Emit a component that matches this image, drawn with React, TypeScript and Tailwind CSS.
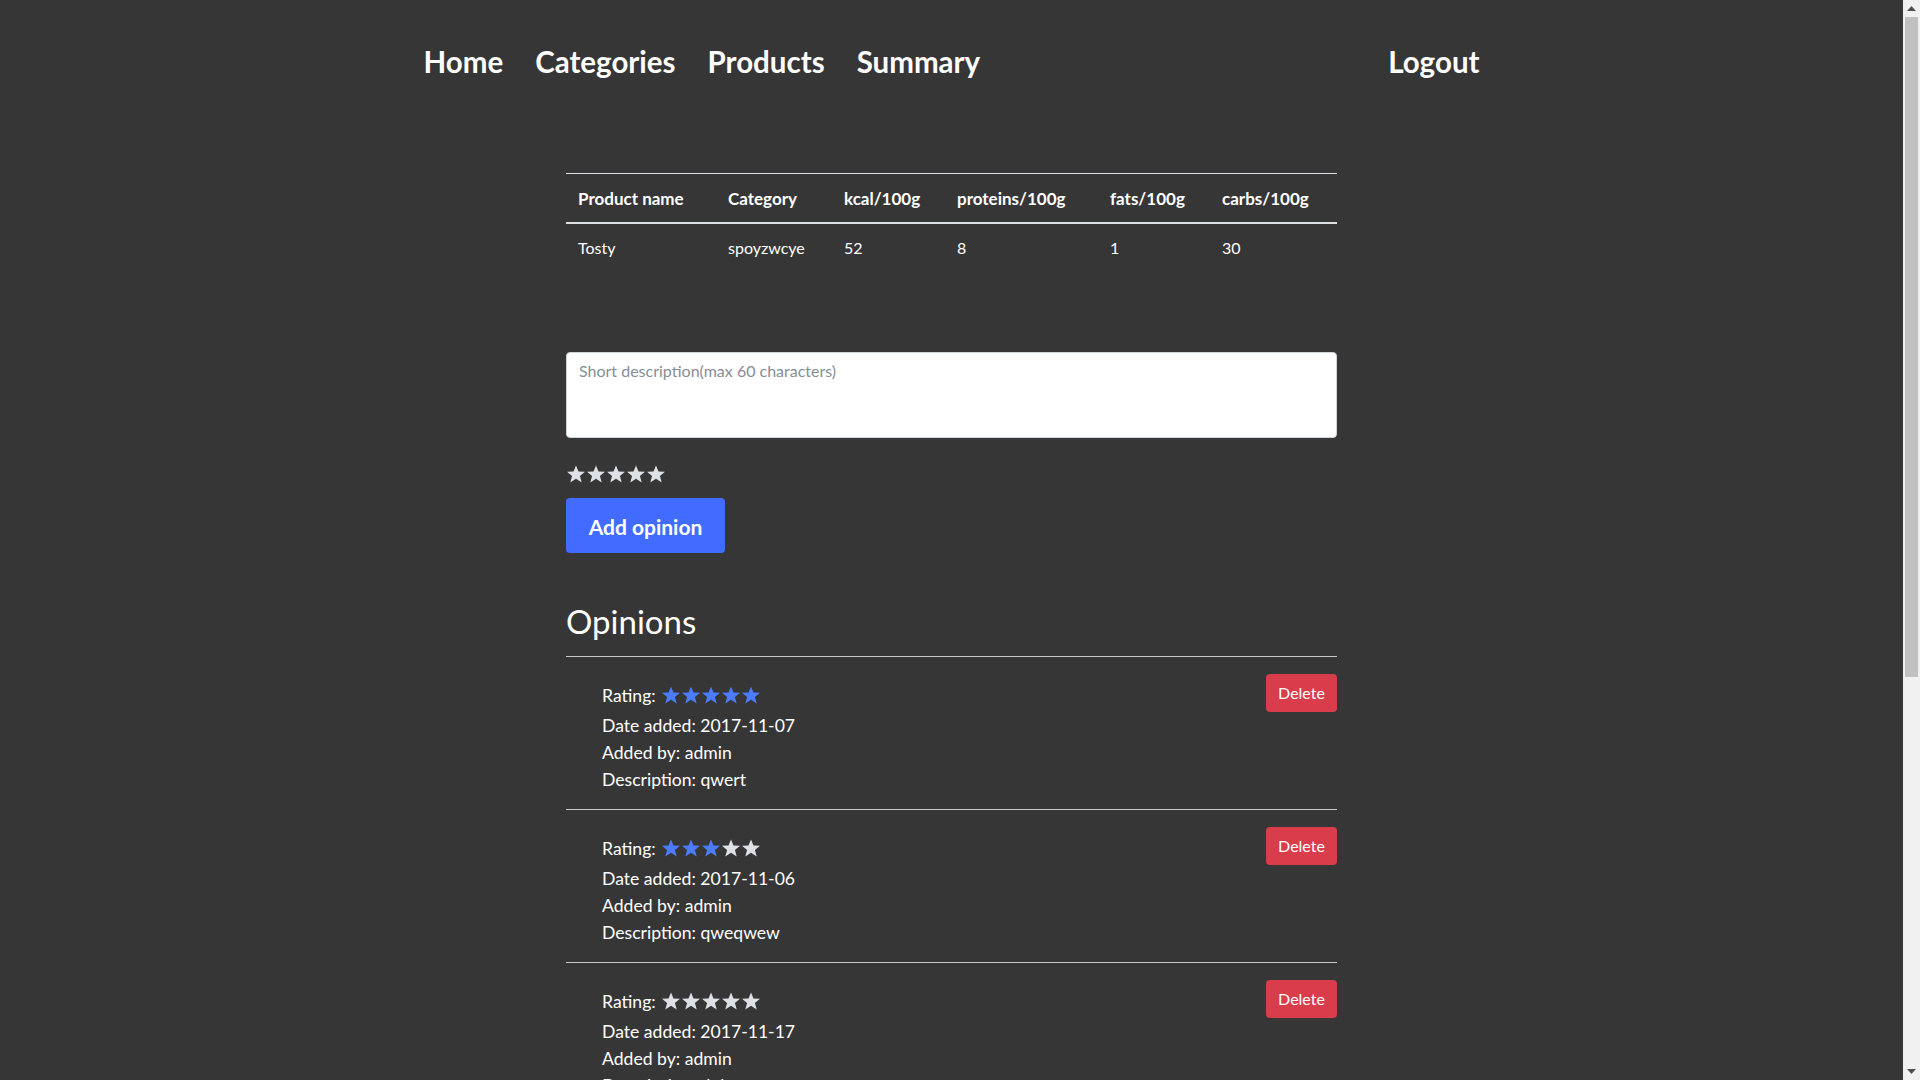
import React from 'react';

const NAV_LEFT = ['Home', 'Categories', 'Products', 'Summary'];

const COLUMNS = [
  { label: 'Product name', w: 'w-[150px]' },
  { label: 'Category', w: 'w-[116px]' },
  { label: 'kcal/100g', w: 'w-[113px]' },
  { label: 'proteins/100g', w: 'w-[153px]' },
  { label: 'fats/100g', w: 'w-[112px]' },
  { label: 'carbs/100g', w: 'w-[127px]' },
];

const ROW = ['Tosty', 'spoyzwcye', '52', '8', '1', '30'];

const OPINIONS = [
  { rating: 5, date: '2017-11-07', by: 'admin', desc: 'qwert' },
  { rating: 3, date: '2017-11-06', by: 'admin', desc: 'qweqwew' },
  { rating: 0, date: '2017-11-17', by: 'admin', desc: 'dobre' },
  { rating: 4, date: '2017-11-18', by: 'admin', desc: 'smaczne' },
];

function Star({ filled }: { filled?: boolean }) {
  return (
    <svg viewBox="0 0 24 23" className={`w-[20px] h-[18px] ${filled ? 'text-[#4b7bff]' : 'text-[#dde0e5]'}`} fill="currentColor">
      <polygon points="12,0.5 15.2,8.3 23.5,8.6 17,13.9 19.3,22.3 12,17.6 4.7,22.3 7,13.9 0.5,8.6 8.8,8.3" />
    </svg>
  );
}

function Stars({ count }: { count: number }) {
  return (
    <span className="flex items-center">
      {[0, 1, 2, 3, 4].map((i) => (
        <Star key={i} filled={i < count} />
      ))}
    </span>
  );
}

function Scrollbar() {
  return (
    <aside className="w-[17px] h-full flex flex-col bg-[#f1f1f1] shrink-0">
      <div className="h-[17px] flex items-center justify-center">
        <svg width="9" height="5" viewBox="0 0 9 5" fill="#505050"><polygon points="4.5,0 9,5 0,5" /></svg>
      </div>
      <div className="flex-1 px-[2px]">
        <div className="h-[660px] bg-[#c1c1c1]" />
      </div>
      <div className="h-[17px] flex items-center justify-center">
        <svg width="9" height="5" viewBox="0 0 9 5" fill="#505050"><polygon points="0,0 9,0 4.5,5" /></svg>
      </div>
    </aside>
  );
}

export default function App() {
  return (
    <div className="flex h-screen w-full overflow-hidden bg-[#363636] text-white font-['Lato',sans-serif]">
      <main className="flex-1 overflow-hidden">
        {/* Top navigation */}
        <nav className="w-[1056px] mx-auto pt-[44px] flex items-center justify-between text-[29.5px] leading-[36px] font-bold">
          <div className="flex gap-[32px]">
            {NAV_LEFT.map((n) => (
              <a key={n} className="cursor-pointer">{n}</a>
            ))}
          </div>
          <a className="cursor-pointer">Logout</a>
        </nav>

        <div className="w-[771px] mx-auto">
          {/* Product table */}
          <table className="w-full table-fixed mt-[93px] border-collapse text-base">
            <thead>
              <tr>
                {COLUMNS.map((c) => (
                  <th key={c.label} className={`${c.w} text-left font-bold text-[17px] leading-[24px] px-3 pt-[13px] pb-[11px] border-t border-b-2 border-t-[#dee2e6] border-b-[#dee2e6]`}>
                    {c.label}
                  </th>
                ))}
              </tr>
            </thead>
            <tbody>
              <tr>
                {ROW.map((v, i) => (
                  <td key={i} className="px-3 py-3 leading-[24px]">{v}</td>
                ))}
              </tr>
            </tbody>
          </table>

          {/* Add opinion form */}
          <textarea
            placeholder="Short description(max 60 characters)"
            className="block w-full h-[86px] mt-[80px] bg-white text-[#495057] border border-[#ced4da] rounded px-3 py-[6px] text-base leading-[24px] resize-none placeholder:text-[#868e96] outline-none"
          />
          <div className="mt-[27px] h-[18px] flex items-center">
            <Stars count={0} />
          </div>
          <button className="mt-[15px] w-[159px] h-[55px] rounded bg-[#416cff] text-white font-bold text-[21px] pt-[2px]">
            Add opinion
          </button>

          {/* Opinions list */}
          <h2 className="mt-[48px] text-[33px] leading-[40px] font-normal pb-[15px] border-b border-[#c8c8c8]">Opinions</h2>
          {OPINIONS.map((o, i) => (
            <div key={i} className="flex justify-between items-start pt-[17px] pb-[16px] border-b border-[#c8c8c8] text-[17.6px]">
              <div className="pt-[5px] pl-[36px]">
                <div className="h-[33px] flex items-center gap-[5px] leading-[33px]">
                  <span>Rating:</span>
                  <span className="-mt-[2px]"><Stars count={o.rating} /></span>
                </div>
                <p className="leading-[27px]">Date added: {o.date}</p>
                <p className="leading-[27px]">Added by: {o.by}</p>
                <p className="leading-[27px]">Description: {o.desc}</p>
              </div>
              <button className="w-[71px] h-[38px] rounded bg-[#d93c4b] text-white text-base">Delete</button>
            </div>
          ))}
        </div>
      </main>
      <Scrollbar />
    </div>
  );
}
